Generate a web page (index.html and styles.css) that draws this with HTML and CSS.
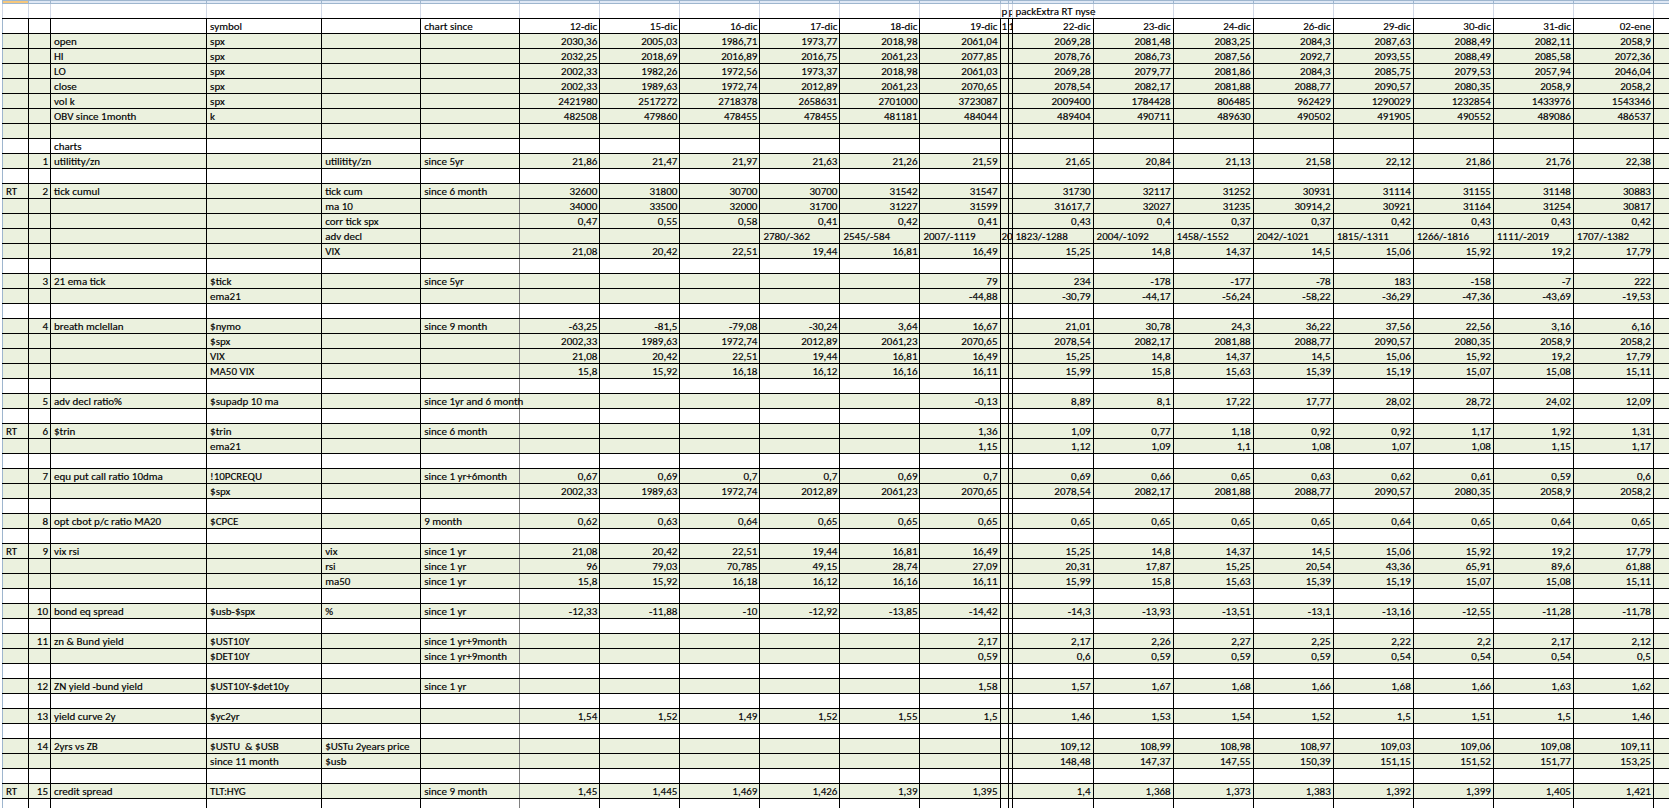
FILE: index.html
```html
<!DOCTYPE html>
<html>
<head>
<meta charset="utf-8">
<title>packExtra RT nyse</title>
<link rel="stylesheet" href="styles.css">
</head>
<body>
<div class="wrap">
<table class="sheet">
<colgroup>
<col class="cA"><col class="cB"><col class="cC"><col class="cD"><col class="cE"><col class="cF">
<col class="cd"><col class="cd"><col class="cd"><col class="cd"><col class="cd"><col class="cd">
<col class="ct1"><col class="ct2">
<col class="ce1"><col class="cd"><col class="cd"><col class="cd"><col class="cd"><col class="cd"><col class="cd"><col class="cd">
<col class="cx">
</colgroup>
<tbody>
<tr class="xh"><td></td><td></td><td></td><td></td><td></td><td></td><td></td><td></td><td></td><td></td><td></td><td></td><td></td><td></td><td></td><td></td><td></td><td></td><td></td><td></td><td></td><td></td><td></td></tr>
<tr class="r0"><td></td><td></td><td></td><td></td><td></td><td></td><td></td><td></td><td></td><td></td><td></td><td></td><td>p</td><td>p</td><td class="l">packExtra RT nyse</td><td></td><td></td><td></td><td></td><td></td><td></td><td></td><td></td></tr>
<tr><td></td><td></td><td></td><td>symbol</td><td></td><td>chart since</td><td>12-dic</td><td>15-dic</td><td>16-dic</td><td>17-dic</td><td>18-dic</td><td>19-dic</td><td>1</td><td>1</td><td>22-dic</td><td>23-dic</td><td>24-dic</td><td>26-dic</td><td>29-dic</td><td>30-dic</td><td>31-dic</td><td>02-ene</td><td></td></tr>
<tr class="g"><td></td><td></td><td>open</td><td>spx</td><td></td><td></td><td>2030,36</td><td>2005,03</td><td>1986,71</td><td>1973,77</td><td>2018,98</td><td>2061,04</td><td></td><td></td><td>2069,28</td><td>2081,48</td><td>2083,25</td><td>2084,3</td><td>2087,63</td><td>2088,49</td><td>2082,11</td><td>2058,9</td><td></td></tr>
<tr class="g"><td></td><td></td><td>HI</td><td>spx</td><td></td><td></td><td>2032,25</td><td>2018,69</td><td>2016,89</td><td>2016,75</td><td>2061,23</td><td>2077,85</td><td></td><td></td><td>2078,76</td><td>2086,73</td><td>2087,56</td><td>2092,7</td><td>2093,55</td><td>2088,49</td><td>2085,58</td><td>2072,36</td><td></td></tr>
<tr class="g"><td></td><td></td><td>LO</td><td>spx</td><td></td><td></td><td>2002,33</td><td>1982,26</td><td>1972,56</td><td>1973,37</td><td>2018,98</td><td>2061,03</td><td></td><td></td><td>2069,28</td><td>2079,77</td><td>2081,86</td><td>2084,3</td><td>2085,75</td><td>2079,53</td><td>2057,94</td><td>2046,04</td><td></td></tr>
<tr class="g"><td></td><td></td><td>close</td><td>spx</td><td></td><td></td><td>2002,33</td><td>1989,63</td><td>1972,74</td><td>2012,89</td><td>2061,23</td><td>2070,65</td><td></td><td></td><td>2078,54</td><td>2082,17</td><td>2081,88</td><td>2088,77</td><td>2090,57</td><td>2080,35</td><td>2058,9</td><td>2058,2</td><td></td></tr>
<tr class="g"><td></td><td></td><td>vol k</td><td>spx</td><td></td><td></td><td>2421980</td><td>2517272</td><td>2718378</td><td>2658631</td><td>2701000</td><td>3723087</td><td></td><td></td><td>2009400</td><td>1784428</td><td>806485</td><td>962429</td><td>1290029</td><td>1232854</td><td>1433976</td><td>1543346</td><td></td></tr>
<tr class="g"><td></td><td></td><td>OBV since 1month</td><td>k</td><td></td><td></td><td>482508</td><td>479860</td><td>478455</td><td>478455</td><td>481181</td><td>484044</td><td></td><td></td><td>489404</td><td>490711</td><td>489630</td><td>490502</td><td>491905</td><td>490552</td><td>489086</td><td>486537</td><td></td></tr>
<tr class="g"><td></td><td></td><td></td><td></td><td></td><td></td><td></td><td></td><td></td><td></td><td></td><td></td><td></td><td></td><td></td><td></td><td></td><td></td><td></td><td></td><td></td><td></td><td></td></tr>
<tr><td></td><td></td><td>charts</td><td></td><td></td><td></td><td></td><td></td><td></td><td></td><td></td><td></td><td></td><td></td><td></td><td></td><td></td><td></td><td></td><td></td><td></td><td></td><td></td></tr>
<tr class="g"><td></td><td>1</td><td>utilitity/zn</td><td></td><td>utilitity/zn</td><td>since 5yr</td><td>21,86</td><td>21,47</td><td>21,97</td><td>21,63</td><td>21,26</td><td>21,59</td><td></td><td></td><td>21,65</td><td>20,84</td><td>21,13</td><td>21,58</td><td>22,12</td><td>21,86</td><td>21,76</td><td>22,38</td><td></td></tr>
<tr><td></td><td></td><td></td><td></td><td></td><td></td><td></td><td></td><td></td><td></td><td></td><td></td><td></td><td></td><td></td><td></td><td></td><td></td><td></td><td></td><td></td><td></td><td></td></tr>
</tbody>
<tbody class="lower">
<tr class="g"><td>RT</td><td>2</td><td>tick cumul</td><td></td><td>tick cum</td><td>since 6 month</td><td>32600</td><td>31800</td><td>30700</td><td>30700</td><td>31542</td><td>31547</td><td></td><td></td><td>31730</td><td>32117</td><td>31252</td><td>30931</td><td>31114</td><td>31155</td><td>31148</td><td>30883</td><td></td></tr>
<tr class="g"><td></td><td></td><td></td><td></td><td>ma 10</td><td></td><td>34000</td><td>33500</td><td>32000</td><td>31700</td><td>31227</td><td>31599</td><td></td><td></td><td>31617,7</td><td>32027</td><td>31235</td><td>30914,2</td><td>30921</td><td>31164</td><td>31254</td><td>30817</td><td></td></tr>
<tr class="g"><td></td><td></td><td></td><td></td><td>corr tick spx</td><td></td><td>0,47</td><td>0,55</td><td>0,58</td><td>0,41</td><td>0,42</td><td>0,41</td><td></td><td></td><td>0,43</td><td>0,4</td><td>0,37</td><td>0,37</td><td>0,42</td><td>0,43</td><td>0,43</td><td>0,42</td><td></td></tr>
<tr class="g"><td></td><td></td><td></td><td></td><td>adv decl</td><td></td><td></td><td></td><td></td><td class="l">2780/-362</td><td class="l">2545/-584</td><td class="l">2007/-1119</td><td class="ov">20</td><td></td><td class="l">1823/-1288</td><td class="l">2004/-1092</td><td class="l">1458/-1552</td><td class="l">2042/-1021</td><td class="l">1815/-1311</td><td class="l">1266/-1816</td><td class="l">1111/-2019</td><td class="l">1707/-1382</td><td></td></tr>
<tr class="g"><td></td><td></td><td></td><td></td><td>VIX</td><td></td><td>21,08</td><td>20,42</td><td>22,51</td><td>19,44</td><td>16,81</td><td>16,49</td><td></td><td></td><td>15,25</td><td>14,8</td><td>14,37</td><td>14,5</td><td>15,06</td><td>15,92</td><td>19,2</td><td>17,79</td><td></td></tr>
<tr><td></td><td></td><td></td><td></td><td></td><td></td><td></td><td></td><td></td><td></td><td></td><td></td><td></td><td></td><td></td><td></td><td></td><td></td><td></td><td></td><td></td><td></td><td></td></tr>
<tr class="g"><td></td><td>3</td><td>21 ema tick</td><td>$tick</td><td></td><td>since 5yr</td><td></td><td></td><td></td><td></td><td></td><td>79</td><td></td><td></td><td>234</td><td>-178</td><td>-177</td><td>-78</td><td>183</td><td>-158</td><td>-7</td><td>222</td><td></td></tr>
<tr class="g"><td></td><td></td><td></td><td>ema21</td><td></td><td></td><td></td><td></td><td></td><td></td><td></td><td>-44,88</td><td></td><td></td><td>-30,79</td><td>-44,17</td><td>-56,24</td><td>-58,22</td><td>-36,29</td><td>-47,36</td><td>-43,69</td><td>-19,53</td><td></td></tr>
<tr><td></td><td></td><td></td><td></td><td></td><td></td><td></td><td></td><td></td><td></td><td></td><td></td><td></td><td></td><td></td><td></td><td></td><td></td><td></td><td></td><td></td><td></td><td></td></tr>
<tr class="g"><td></td><td>4</td><td>breath mclellan</td><td>$nymo</td><td></td><td>since 9 month</td><td>-63,25</td><td>-81,5</td><td>-79,08</td><td>-30,24</td><td>3,64</td><td>16,67</td><td></td><td></td><td>21,01</td><td>30,78</td><td>24,3</td><td>36,22</td><td>37,56</td><td>22,56</td><td>3,16</td><td>6,16</td><td></td></tr>
<tr class="g"><td></td><td></td><td></td><td>$spx</td><td></td><td></td><td>2002,33</td><td>1989,63</td><td>1972,74</td><td>2012,89</td><td>2061,23</td><td>2070,65</td><td></td><td></td><td>2078,54</td><td>2082,17</td><td>2081,88</td><td>2088,77</td><td>2090,57</td><td>2080,35</td><td>2058,9</td><td>2058,2</td><td></td></tr>
<tr class="g"><td></td><td></td><td></td><td>VIX</td><td></td><td></td><td>21,08</td><td>20,42</td><td>22,51</td><td>19,44</td><td>16,81</td><td>16,49</td><td></td><td></td><td>15,25</td><td>14,8</td><td>14,37</td><td>14,5</td><td>15,06</td><td>15,92</td><td>19,2</td><td>17,79</td><td></td></tr>
<tr class="g"><td></td><td></td><td></td><td>MA50 VIX</td><td></td><td></td><td>15,8</td><td>15,92</td><td>16,18</td><td>16,12</td><td>16,16</td><td>16,11</td><td></td><td></td><td>15,99</td><td>15,8</td><td>15,63</td><td>15,39</td><td>15,19</td><td>15,07</td><td>15,08</td><td>15,11</td><td></td></tr>
<tr><td></td><td></td><td></td><td></td><td></td><td></td><td></td><td></td><td></td><td></td><td></td><td></td><td></td><td></td><td></td><td></td><td></td><td></td><td></td><td></td><td></td><td></td><td></td></tr>
<tr class="g"><td></td><td>5</td><td>adv decl ratio%</td><td>$supadp 10 ma</td><td></td><td>since 1yr and 6 month</td><td></td><td></td><td></td><td></td><td></td><td>-0,13</td><td></td><td></td><td>8,89</td><td>8,1</td><td>17,22</td><td>17,77</td><td>28,02</td><td>28,72</td><td>24,02</td><td>12,09</td><td></td></tr>
<tr><td></td><td></td><td></td><td></td><td></td><td></td><td></td><td></td><td></td><td></td><td></td><td></td><td></td><td></td><td></td><td></td><td></td><td></td><td></td><td></td><td></td><td></td><td></td></tr>
<tr class="g"><td>RT</td><td>6</td><td>$trin</td><td>$trin</td><td></td><td>since 6 month</td><td></td><td></td><td></td><td></td><td></td><td>1,36</td><td></td><td></td><td>1,09</td><td>0,77</td><td>1,18</td><td>0,92</td><td>0,92</td><td>1,17</td><td>1,92</td><td>1,31</td><td></td></tr>
<tr class="g"><td></td><td></td><td></td><td>ema21</td><td></td><td></td><td></td><td></td><td></td><td></td><td></td><td>1,15</td><td></td><td></td><td>1,12</td><td>1,09</td><td>1,1</td><td>1,08</td><td>1,07</td><td>1,08</td><td>1,15</td><td>1,17</td><td></td></tr>
<tr><td></td><td></td><td></td><td></td><td></td><td></td><td></td><td></td><td></td><td></td><td></td><td></td><td></td><td></td><td></td><td></td><td></td><td></td><td></td><td></td><td></td><td></td><td></td></tr>
<tr class="g"><td></td><td>7</td><td>equ put call ratio 10dma</td><td>!10PCREQU</td><td></td><td>since 1 yr+6month</td><td>0,67</td><td>0,69</td><td>0,7</td><td>0,7</td><td>0,69</td><td>0,7</td><td></td><td></td><td>0,69</td><td>0,66</td><td>0,65</td><td>0,63</td><td>0,62</td><td>0,61</td><td>0,59</td><td>0,6</td><td></td></tr>
<tr class="g"><td></td><td></td><td></td><td>$spx</td><td></td><td></td><td>2002,33</td><td>1989,63</td><td>1972,74</td><td>2012,89</td><td>2061,23</td><td>2070,65</td><td></td><td></td><td>2078,54</td><td>2082,17</td><td>2081,88</td><td>2088,77</td><td>2090,57</td><td>2080,35</td><td>2058,9</td><td>2058,2</td><td></td></tr>
<tr><td></td><td></td><td></td><td></td><td></td><td></td><td></td><td></td><td></td><td></td><td></td><td></td><td></td><td></td><td></td><td></td><td></td><td></td><td></td><td></td><td></td><td></td><td></td></tr>
<tr class="g"><td></td><td>8</td><td>opt cbot p/c ratio MA20</td><td>$CPCE</td><td></td><td>9 month</td><td>0,62</td><td>0,63</td><td>0,64</td><td>0,65</td><td>0,65</td><td>0,65</td><td></td><td></td><td>0,65</td><td>0,65</td><td>0,65</td><td>0,65</td><td>0,64</td><td>0,65</td><td>0,64</td><td>0,65</td><td></td></tr>
<tr><td></td><td></td><td></td><td></td><td></td><td></td><td></td><td></td><td></td><td></td><td></td><td></td><td></td><td></td><td></td><td></td><td></td><td></td><td></td><td></td><td></td><td></td><td></td></tr>
<tr class="g"><td>RT</td><td>9</td><td>vix rsi</td><td></td><td>vix</td><td>since 1 yr</td><td>21,08</td><td>20,42</td><td>22,51</td><td>19,44</td><td>16,81</td><td>16,49</td><td></td><td></td><td>15,25</td><td>14,8</td><td>14,37</td><td>14,5</td><td>15,06</td><td>15,92</td><td>19,2</td><td>17,79</td><td></td></tr>
<tr class="g"><td></td><td></td><td></td><td></td><td>rsi</td><td>since 1 yr</td><td>96</td><td>79,03</td><td>70,785</td><td>49,15</td><td>28,74</td><td>27,09</td><td></td><td></td><td>20,31</td><td>17,87</td><td>15,25</td><td>20,54</td><td>43,36</td><td>65,91</td><td>89,6</td><td>61,88</td><td></td></tr>
<tr class="g"><td></td><td></td><td></td><td></td><td>ma50</td><td>since 1 yr</td><td>15,8</td><td>15,92</td><td>16,18</td><td>16,12</td><td>16,16</td><td>16,11</td><td></td><td></td><td>15,99</td><td>15,8</td><td>15,63</td><td>15,39</td><td>15,19</td><td>15,07</td><td>15,08</td><td>15,11</td><td></td></tr>
<tr><td></td><td></td><td></td><td></td><td></td><td></td><td></td><td></td><td></td><td></td><td></td><td></td><td></td><td></td><td></td><td></td><td></td><td></td><td></td><td></td><td></td><td></td><td></td></tr>
<tr class="g"><td></td><td>10</td><td>bond eq spread</td><td>$usb-$spx</td><td>%</td><td>since 1 yr</td><td>-12,33</td><td>-11,88</td><td>-10</td><td>-12,92</td><td>-13,85</td><td>-14,42</td><td></td><td></td><td>-14,3</td><td>-13,93</td><td>-13,51</td><td>-13,1</td><td>-13,16</td><td>-12,55</td><td>-11,28</td><td>-11,78</td><td></td></tr>
<tr><td></td><td></td><td></td><td></td><td></td><td></td><td></td><td></td><td></td><td></td><td></td><td></td><td></td><td></td><td></td><td></td><td></td><td></td><td></td><td></td><td></td><td></td><td></td></tr>
<tr class="g"><td></td><td>11</td><td>zn &amp; Bund yield</td><td>$UST10Y</td><td></td><td>since 1 yr+9month</td><td></td><td></td><td></td><td></td><td></td><td>2,17</td><td></td><td></td><td>2,17</td><td>2,26</td><td>2,27</td><td>2,25</td><td>2,22</td><td>2,2</td><td>2,17</td><td>2,12</td><td></td></tr>
<tr class="g"><td></td><td></td><td></td><td>$DET10Y</td><td></td><td>since 1 yr+9month</td><td></td><td></td><td></td><td></td><td></td><td>0,59</td><td></td><td></td><td>0,6</td><td>0,59</td><td>0,59</td><td>0,59</td><td>0,54</td><td>0,54</td><td>0,54</td><td>0,5</td><td></td></tr>
<tr><td></td><td></td><td></td><td></td><td></td><td></td><td></td><td></td><td></td><td></td><td></td><td></td><td></td><td></td><td></td><td></td><td></td><td></td><td></td><td></td><td></td><td></td><td></td></tr>
<tr class="g"><td></td><td>12</td><td>ZN yield -bund yield</td><td>$UST10Y-$det10y</td><td></td><td>since 1 yr</td><td></td><td></td><td></td><td></td><td></td><td>1,58</td><td></td><td></td><td>1,57</td><td>1,67</td><td>1,68</td><td>1,66</td><td>1,68</td><td>1,66</td><td>1,63</td><td>1,62</td><td></td></tr>
<tr><td></td><td></td><td></td><td></td><td></td><td></td><td></td><td></td><td></td><td></td><td></td><td></td><td></td><td></td><td></td><td></td><td></td><td></td><td></td><td></td><td></td><td></td><td></td></tr>
<tr class="g"><td></td><td>13</td><td>yield curve 2y</td><td>$yc2yr</td><td></td><td></td><td>1,54</td><td>1,52</td><td>1,49</td><td>1,52</td><td>1,55</td><td>1,5</td><td></td><td></td><td>1,46</td><td>1,53</td><td>1,54</td><td>1,52</td><td>1,5</td><td>1,51</td><td>1,5</td><td>1,46</td><td></td></tr>
<tr><td></td><td></td><td></td><td></td><td></td><td></td><td></td><td></td><td></td><td></td><td></td><td></td><td></td><td></td><td></td><td></td><td></td><td></td><td></td><td></td><td></td><td></td><td></td></tr>
<tr class="g"><td></td><td>14</td><td>2yrs vs ZB</td><td>$USTU &nbsp;&amp; $USB</td><td>$USTu 2years price</td><td></td><td></td><td></td><td></td><td></td><td></td><td></td><td></td><td></td><td>109,12</td><td>108,99</td><td>108,98</td><td>108,97</td><td>109,03</td><td>109,06</td><td>109,08</td><td>109,11</td><td></td></tr>
<tr class="g"><td></td><td></td><td></td><td>since 11 month</td><td>$usb</td><td></td><td></td><td></td><td></td><td></td><td></td><td></td><td></td><td></td><td>148,48</td><td>147,37</td><td>147,55</td><td>150,39</td><td>151,15</td><td>151,52</td><td>151,77</td><td>153,25</td><td></td></tr>
<tr><td></td><td></td><td></td><td></td><td></td><td></td><td></td><td></td><td></td><td></td><td></td><td></td><td></td><td></td><td></td><td></td><td></td><td></td><td></td><td></td><td></td><td></td><td></td></tr>
<tr class="g"><td>RT</td><td>15</td><td>credit spread</td><td>TLT:HYG</td><td></td><td>since 9 month</td><td>1,45</td><td>1,445</td><td>1,469</td><td>1,426</td><td>1,39</td><td>1,395</td><td></td><td></td><td>1,4</td><td>1,368</td><td>1,373</td><td>1,383</td><td>1,392</td><td>1,399</td><td>1,405</td><td>1,421</td><td></td></tr>
<tr><td></td><td></td><td></td><td></td><td></td><td></td><td></td><td></td><td></td><td></td><td></td><td></td><td></td><td></td><td></td><td></td><td></td><td></td><td></td><td></td><td></td><td></td><td></td></tr>
</tbody>
</table>
</div>
</body>
</html>
```
FILE: styles.css
```css
html, body {
  margin: 0;
  padding: 0;
  background: #ffffff;
  overflow: hidden;
}

body {
  font-family: Calibri, Carlito, "Liberation Sans", Arial, sans-serif;
  font-size: 11px;
  color: #000000;
  -webkit-text-stroke: 0.15px #000000;
}

.wrap {
  padding-left: 2px;
  width: 1700px;
}

.sheet {
  border-collapse: collapse;
  table-layout: fixed;
  width: 1690px;
}

.cA { width: 26px; }
.cB { width: 22px; }
.cC { width: 156px; }
.cD { width: 115px; }
.cE { width: 99px; }
.cF { width: 99px; }
.cd { width: 80px; }
.ct1 { width: 8px; }
.ct2 { width: 4px; }
.ce1 { width: 81px; }
.cx { width: 38px; }

.sheet tr {
  height: 15px;
}

.sheet td {
  border: 1px solid #000000;
  padding: 2px 2px 0 3px;
  line-height: 12px;
  white-space: nowrap;
  overflow: visible;
  vertical-align: top;
  text-align: left;
}

.sheet td:first-child {
  border-left-color: #9eb6ce;
}

.sheet td:nth-child(2),
.sheet td:nth-child(n+7) {
  text-align: right;
}

.sheet td.l {
  text-align: left;
  padding-left: 3px;
}

.sheet td:nth-child(13),
.sheet td:nth-child(14) {
  padding: 2px 0 0 1px;
  overflow: hidden;
  text-align: left;
}

.sheet td:nth-child(14) {
  padding-left: 0;
}

.sheet td.ov {
  overflow: visible;
}

.sheet tr.g td {
  background: #ebf1de;
}

/* Excel column-header strip */
.sheet tr.xh {
  height: 3px;
}

.sheet tr.xh td {
  height: 2px;
  padding: 0;
  line-height: 0;
  font-size: 0;
  background: #dfe8f5;
  border-color: #9eb6ce;
}

.sheet tr.xh td:first-child {
  background: #f6c77c;
}

/* first sheet row: plain gridlines */
.sheet tr.r0 td {
  border-color: #d0d7e5;
  border-bottom-color: #000000;
}

.sheet tr.r0 td:nth-child(13),
.sheet tr.r0 td:nth-child(14),
.sheet tr.r0 td:nth-child(15) {
  border-left-color: #000000;
}

/* grey divider before the first date column */
.lower td:nth-child(6) {
  border-right-color: #808080;
}

.lower td:nth-child(7) {
  border-left-color: #808080;
}
```
